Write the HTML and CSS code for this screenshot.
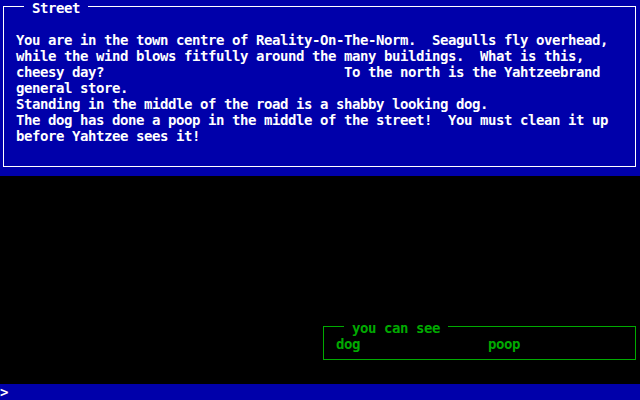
FILE: index.html
```
<!DOCTYPE html>
<html>
<head>
<meta charset="utf-8">
<link rel="stylesheet" href="styles.css">
</head>
<body>
<div class="screen">
  <section class="room">
    <div class="frame">
      <div class="frame-title">Street</div>
      <div class="desc">You are in the town centre of Reality-On-The-Norm.  Seagulls fly overhead,
while the wind blows fitfully around the many buildings.  What is this,
cheesy day?                              To the north is the Yahtzeebrand
general store.
Standing in the middle of the road is a shabby looking dog.
The dog has done a poop in the middle of the street!  You must clean it up
before Yahtzee sees it!</div>
    </div>
  </section>
  <section class="view">
    <div class="seebox">
      <div class="see-title">you can see</div>
      <div class="items">
        <span class="item">dog</span>
        <span class="item">poop</span>
      </div>
    </div>
  </section>
  <footer class="prompt"><span class="caret">&gt;</span></footer>
</div>
</body>
</html>
```
FILE: styles.css
```
html, body {
  margin: 0;
  padding: 0;
  background: #000;
}
.screen {
  width: 640px;
  height: 400px;
  display: flex;
  flex-direction: column;
  font-family: "DejaVu Sans Mono", "Liberation Mono", monospace;
  font-weight: bold;
  font-size: 14px;
  letter-spacing: -0.43px;
  line-height: 16px;
  color: #fff;
  overflow: hidden;
}
.room {
  height: 176px;
  flex: 0 0 176px;
  background: #0000aa;
  padding: 6px 4px 9px 3px;
  box-sizing: border-box;
  display: flex;
}
.frame {
  flex: 1;
  border: 1px solid #fff;
}
.frame-title {
  width: fit-content;
  margin: -7px 0 16px 20px;
  padding: 0 8px;
  background: #0000aa;
  height: 16px;
}
.desc {
  white-space: pre;
  padding-left: 12px;
}
.view {
  flex: 0 0 208px;
  display: flex;
  flex-direction: column;
  justify-content: flex-end;
  padding: 0 4px 24px 323px;
  box-sizing: border-box;
}
.seebox {
  border: 1px solid #00aa00;
  color: #00aa00;
  padding-bottom: 7px;
}
.see-title {
  width: fit-content;
  margin: -7px 0 0 20px;
  padding: 0 8px;
  background: #000;
  height: 16px;
}
.items {
  display: grid;
  grid-template-columns: repeat(2, 152px);
  padding-left: 12px;
  height: 16px;
}
.prompt {
  flex: 0 0 16px;
  background: #0000aa;
  height: 16px;
}
.caret {
  display: block;
  width: 8px;
}
```
